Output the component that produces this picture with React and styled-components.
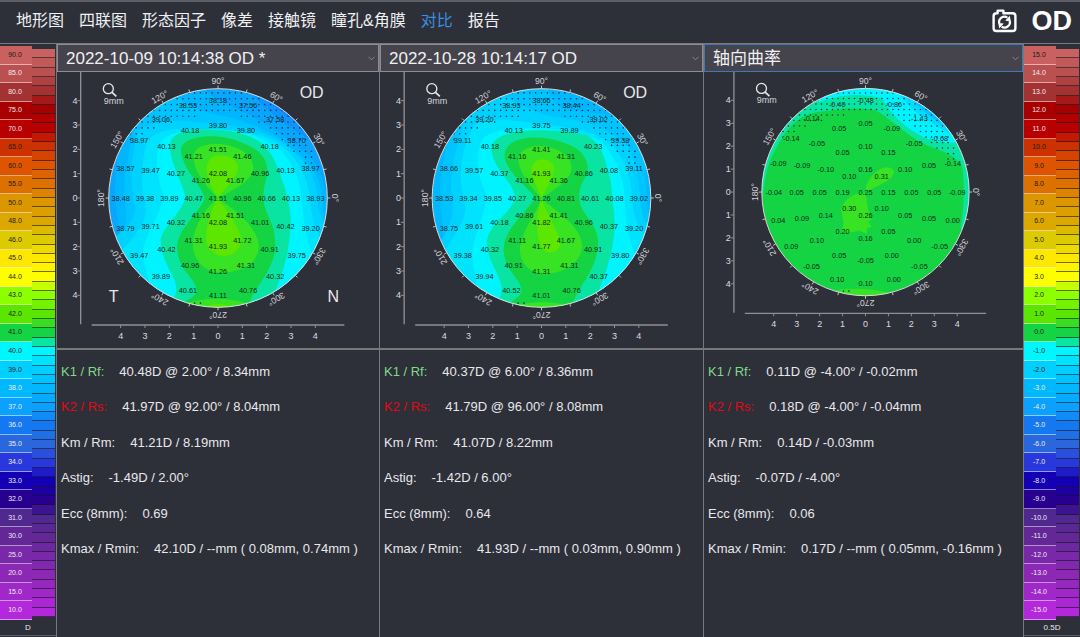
import React, { useState } from 'react';
import styled, { createGlobalStyle } from 'styled-components';

const GlobalStyle = createGlobalStyle`
  * { box-sizing: border-box; }
  body {
    margin: 0;
    background: #2d2f39;
    color: #e8e8ea;
    font-family: "Liberation Sans", "Noto Sans CJK SC", sans-serif;
  }
`;

const Page = styled.div`
  display: flex;
  flex-direction: column;
  min-height: 100vh;
`;

const Header = styled.header`
  display: flex;
  align-items: center;
  justify-content: space-between;
  height: 44px;
  padding: 0 8px 4px 16px;
  border-top: 2px solid #5b5e66;
  border-bottom: 1px solid #77797f;
`;

const Nav = styled.nav`
  display: flex;
  gap: 15px;
`;

const NavLink = styled.a`
  font-size: 16px;
  line-height: 24px;
  white-space: nowrap;
  text-decoration: none;
  color: ${(props) => (props.$active ? '#3b8de0' : '#f0f0f2')};
`;

const HeaderRight = styled.div`
  display: flex;
  align-items: center;
  gap: 15px;
`;

const CameraButton = styled.button`
  display: flex;
  padding: 0;
  border: none;
  background: none;
  color: #fff;
  cursor: pointer;
`;

const Eye = styled.span`
  font-size: 27px;
  line-height: 30px;
  font-weight: bold;
  color: #fff;
`;

const Body = styled.main`
  display: flex;
  flex: 1;
`;

// color scales on both sides

const Scale = styled.aside`
  display: flex;
  flex-direction: column;
  width: ${(props) => (props.$side === 'left' ? '57px' : '56px')};
  border-right: ${(props) => (props.$side === 'left' ? '1px solid #77797f' : 'none')};
`;

const ScaleBars = styled.div`
  display: grid;
  grid-template-columns: 32px 1fr;
  height: 576px;
  padding: 2px 0 0;
`;

const Steps = styled.ol`
  display: grid;
  grid-auto-rows: 1fr;
  margin: 0;
  padding: 0;
  list-style: none;
`;

const Step = styled.li`
  display: flex;
  align-items: center;
  justify-content: center;
  min-height: 0;
  font-size: 7px;
  line-height: 8px;
  padding-right: 2px;
  background: ${(props) => props.$color};
  color: ${(props) => (props.$dark ? '#1c1c10' : '#ececf4')};
  border-bottom: 1px solid rgba(255, 255, 255, 0.5);
`;

const Ladder = styled.div`
  display: grid;
  grid-auto-rows: 1fr;
  margin: 3px 1px 3px 0;
`;

const Band = styled.span`
  min-height: 0;
  background: ${(props) => props.$color};
  border-bottom: 1px solid rgba(20, 20, 30, 0.6);
`;

const ScaleUnit = styled.div`
  height: 16px;
  font-size: 8px;
  line-height: 16px;
  text-align: center;
  border-bottom: 1px solid #5b5e66;
`;

// exam panels

const Panels = styled.div`
  display: grid;
  grid-template-columns: 323fr 324fr 320fr;
  flex: 1;
`;

const Panel = styled.section`
  display: flex;
  flex-direction: column;
  min-width: 0;
  border-right: 1px solid #77797f;
`;

const SelectBox = styled.div`
  display: grid;
  align-items: center;

  > * {
    grid-area: 1 / 1;
  }

  svg {
    justify-self: end;
    margin-right: 4px;
    pointer-events: none;
  }
`;

const ExamSelect = styled.select`
  appearance: none;
  width: 100%;
  height: 28px;
  padding: 0 20px 0 8px;
  border: 1px solid ${(props) => (props.$active ? '#3f78b4' : '#8d8d93')};
  border-radius: 0;
  background: #45444c;
  color: #f0f0f2;
  font-family: inherit;
  font-size: 17px;
  outline: none;
`;

const MapSvg = styled.svg`
  display: block;
  width: 100%;
  height: 276px;
  font-family: "Liberation Sans", sans-serif;
`;

const Results = styled.dl`
  display: grid;
  grid-template-rows: repeat(6, 1fr);
  height: 219px;
  margin: 0;
  padding: 4px 4px 0;
  border-top: 2px solid #77797b;
`;

const Result = styled.div`
  display: flex;
  align-items: center;
  gap: 15px;
  font-size: 13px;
  line-height: 20px;
  white-space: nowrap;
`;

const ResultName = styled.dt`
  color: ${(props) => props.$color || '#e8e8ea'};
`;

const ResultValue = styled.dd`
  margin: 0;
`;

// [background, dark text]
const STEP_COLORS = [
  ['#c96161', true], ['#bb5050', false], ['#a43232', false], ['#a80000', false],
  ['#b80000', false], ['#cb3200', true], ['#de5400', true], ['#dc7000', true],
  ['#dc9600', true], ['#dca800', true], ['#dccb00', true], ['#ffe800', true],
  ['#ffff00', true], ['#8cff00', true], ['#5ae600', true], ['#14d444', true],
  ['#00f6ff', true], ['#00d0ff', true], ['#00b8ff', false], ['#0ca0ff', false],
  ['#1478f0', false], ['#2a66dc', false], ['#2838dc', false], ['#1400b4', false],
  ['#280090', false], ['#502890', false], ['#642896', false], ['#7828a8', false],
  ['#8c28b4', false], ['#a028c8', false], ['#b428dc', false],
];

const POWER_STEPS = [
  90, 85, 80, 75, 70, 65, 60, 55, 50, 48, 46, 45, 44, 43, 42, 41,
  40, 39, 38, 37, 36, 35, 34, 33, 32, 31, 30, 25, 20, 15, 10,
];
const DIFF_STEPS = STEP_COLORS.map((_, i) => 15 - i);

const NAV_ITEMS = ['地形图', '四联图', '形态因子', '像差', '接触镜', '瞳孔&角膜', '对比', '报告'];

const MAP_1 = {
  radius: 328,
  mm: 73,
  viewBox: '-480 -378 960 828',
  eye: 'OD',
  sides: true,
  base: '#08a6ff',
  center: '41.51',
  rings: [
    '40.96 41.67 42.08 41.26 40.47 41.16 42.08 41.51',
    '40.66 40.96 41.46 41.51 41.21 40.27 39.89 40.32 41.31 41.93 41.72 41.01',
    '40.13 40.13 40.18 39.80 39.80 40.18 40.13 39.47 39.38 39.71 40.42 40.96 41.26 41.31 40.91 40.42',
    '38.93 38.97 38.70 37.58 37.56 38.18 38.53 39.06 38.97 38.57 38.48 38.79 39.47 39.89 40.61 41.11 40.76 40.32 39.75 39.20',
  ],
  zones: [
    ['#0c94ff', 'M80 -340 C120 -280 190 -225 330 -140 L400 -340Z'],
    ['#1480fa', 'M110 -340 C150 -285 200 -250 300 -185 L400 -340Z'],
    ['#00b6ff', 'M-270 -340 C-300 -120 -318 -30 -305 30 C-295 110 -290 140 -270 220 L-180 400 L400 400 L330 60 C330 -30 310 -90 270 -130 C200 -190 120 -240 40 -275 C0 -290 -30 -320 -60 -340Z'],
    ['#00c4ff', 'M-210 -340 C-270 -160 -290 -50 -278 20 C-270 100 -290 130 -310 200 L-180 400 L400 400 L315 40 C315 -50 290 -90 240 -135 C180 -190 110 -225 20 -245 C-50 -255 -110 -285 -170 -340Z'],
    ['#00d2ff', 'M-240 -200 C-262 -120 -264 -50 -250 20 C-246 60 -265 90 -330 130 L-180 400 L400 400 L345 120 C315 80 302 50 298 0 C294 -70 260 -110 215 -150 C160 -195 90 -215 0 -222 C-90 -232 -190 -245 -240 -200Z'],
    ['#00e3ff', 'M-215 -160 C-232 -100 -232 -30 -216 30 C-216 80 -245 110 -300 170 L-200 400 L400 400 L320 140 C290 100 280 60 276 0 C268 -60 245 -110 200 -150 C140 -200 60 -200 0 -203 C-90 -212 -190 -218 -215 -160Z'],
    ['#00f4ff', 'M-170 -170 C-195 -130 -180 -60 -165 -10 C-170 60 -225 110 -225 170 C-220 220 -200 250 -190 340 L250 340 L290 190 C260 110 256 60 250 0 C246 -60 220 -120 170 -158 C110 -200 0 -212 -60 -205 C-110 -200 -150 -195 -170 -170Z'],
    ['#0ae4a2', 'M-143 -166 C-150 -110 -105 -50 -98 0 C-112 50 -172 90 -172 130 C-170 200 -118 240 -126 280 C-130 310 -150 320 -160 340 L150 340 C170 270 218 200 218 60 C216 20 206 -20 190 -60 C170 -120 150 -160 100 -182 C50 -208 -130 -225 -143 -166Z'],
    ['#14d444', 'M-111 -146 C-111 -90 -50 -40 -40 0 C-50 40 -122 90 -123 150 C-118 220 -68 240 -64 275 C-64 300 -100 305 -110 320 L90 340 C95 270 170 230 172 140 C172 70 138 50 136 0 C136 -50 152 -60 148 -90 C140 -140 100 -155 60 -170 C0 -195 -105 -190 -111 -146Z'],
    ['#37e322', 'M0 0 C-40 -40 -74 -80 -74 -128 C-68 -158 -30 -163 0 -162 C60 -160 106 -130 106 -90 C104 -50 40 -20 0 0Z'],
    ['#37e322', 'M0 0 C-40 30 -76 90 -76 142 C-70 200 -30 224 10 224 C70 222 122 200 122 142 C118 80 40 30 0 0Z'],
    ['#5ce600', 'M0 0 C-20 -30 -34 -60 -34 -90 C-32 -118 -12 -128 8 -128 C40 -126 60 -110 60 -90 C58 -60 20 -30 0 0Z'],
    ['#5ce600', 'M0 0 C-18 30 -36 80 -36 120 C-34 160 -5 174 20 174 C50 172 70 150 70 124 C62 80 20 30 0 0Z'],
    ['#37e322', 'M-120 326 C-60 294 50 294 110 326 L0 350Z'],
    ['#5ce600', 'M-44 330 C-20 314 20 314 44 330Z'],
  ],
};

const MAP_2 = {
  radius: 328,
  mm: 73,
  viewBox: '-480 -378 960 828',
  eye: 'OD',
  base: '#00b8ff',
  center: '41.26',
  rings: [
    '40.81 41.36 41.93 41.16 40.27 40.86 41.82 41.41',
    '40.61 40.86 41.31 41.41 41.16 40.37 39.85 40.18 41.11 41.77 41.67 40.96',
    '40.08 40.08 40.23 39.89 39.75 40.13 40.18 39.57 39.34 39.61 40.32 40.91 41.31 41.31 40.91 40.37',
    '39.02 39.11 39.38 39.02 38.44 38.66 38.93 39.20 39.11 38.66 38.53 38.75 39.38 39.94 40.52 41.01 40.76 40.37 39.80 39.20',
  ],
  zones: [
    ['#00c4ff', 'M-230 -340 C-290 -160 -310 -60 -302 0 C-294 110 -290 140 -300 220 L-180 400 L400 400 L318 40 C318 -40 300 -80 320 -120 L240 -240 C160 -260 90 -255 50 -275 C30 -300 20 -320 10 -340Z'],
    ['#00d2ff', 'M-215 -280 C-260 -160 -280 -60 -268 10 C-262 60 -280 110 -330 160 L-180 400 L400 400 L340 100 C300 70 298 40 296 0 C292 -60 285 -100 260 -150 C200 -220 110 -235 20 -245 C-30 -265 -120 -300 -150 -340Z'],
    ['#00e3ff', 'M-200 -220 C-250 -140 -250 -40 -228 20 C-226 80 -270 110 -310 200 L-180 400 L400 400 L330 130 C280 90 276 40 272 0 C268 -70 250 -120 210 -160 C160 -205 60 -215 0 -222 C-80 -232 -150 -245 -200 -220Z'],
    ['#00f4ff', 'M-175 -180 C-205 -130 -190 -60 -165 -10 C-170 60 -205 110 -208 170 C-204 230 -190 260 -180 340 L250 340 L290 190 C255 110 252 60 250 0 C246 -60 225 -120 180 -170 C110 -205 0 -212 -60 -210 C-110 -206 -150 -200 -175 -180Z'],
    ['#0ae4a2', 'M-151 -150 C-150 -90 -85 -50 -78 0 C-95 50 -162 80 -164 135 C-160 200 -114 240 -120 280 C-124 310 -140 320 -150 340 L150 340 C170 270 214 200 220 80 C218 30 214 20 208 -50 C190 -120 180 -170 130 -190 C50 -206 -140 -220 -151 -150Z'],
    ['#14d444', 'M-111 -130 C-111 -80 -35 -30 -20 0 C-45 45 -112 90 -114 155 C-110 220 -64 240 -60 275 C-60 300 -90 305 -100 320 L90 340 C95 270 168 230 170 130 C166 70 115 50 113 0 C113 -50 140 -60 139 -95 C130 -140 100 -155 60 -168 C0 -190 -105 -190 -111 -130Z'],
    ['#37e322', 'M0 0 C-30 -30 -70 -80 -70 -120 C-60 -150 -30 -158 0 -156 C60 -150 94 -120 90 -85 C84 -50 30 -20 0 0Z'],
    ['#37e322', 'M0 0 C-15 50 -64 100 -65 160 C-60 210 -20 228 10 228 C70 226 122 190 122 142 C118 80 40 40 0 0Z'],
    ['#5ce600', 'M0 0 C-10 -30 -30 -60 -30 -85 C-28 -108 -12 -116 6 -116 C26 -114 38 -100 38 -88 C36 -60 14 -30 0 0Z'],
    ['#5ce600', 'M0 0 C-8 30 -16 60 -12 100 C-8 140 2 162 24 164 C46 162 58 150 56 134 C44 80 10 40 0 0Z'],
    ['#37e322', 'M-90 326 C-50 308 50 308 95 326 L0 350Z'],
  ],
};

const MAP_3 = {
  radius: 312,
  mm: 69,
  viewBox: '-486 -360 960 828',
  base: '#14d444',
  center: '0.25',
  rings: [
    '0.15 0.31 0.16 0.10 0.19 0.30 0.26 0.10',
    '0.05 0.10 0.15 0.10 0.05 -0.10 0.05 0.14 0.20 0.16 0.05 0.05',
    '0.05 0.05 -0.05 -0.09 0.05 0.05 -0.05 -0.09 0.05 0.09 0.10 0.05 -0.05 0.00 0.00 0.05',
    '-0.09 -0.14 -0.68 -1.43 -0.86 -0.48 -0.40 -0.14 -0.14 -0.09 -0.04 0.04 0.09 -0.05 0.10 0.10 0.00 -0.05 -0.05 0.00',
  ],
  zones: [
    ['#0ae4a2', 'M-330 60 C-300 20 -310 -40 -285 -100 C-250 -170 -220 -225 -150 -240 C-90 -248 -30 -258 30 -246 C80 -220 130 -160 200 -135 C240 -120 270 -110 290 -80 C300 -20 296 60 285 110 L330 120 L380 -340 L-340 -340Z'],
    ['#00f4ff', 'M-140 -270 C-70 -298 0 -296 50 -282 C70 -240 130 -180 190 -160 C230 -150 260 -145 290 -150 L340 -330 L-140 -340Z'],
    ['#00dcff', 'M85 -330 C110 -270 140 -240 260 -172 L340 -330Z'],
    ['#00c2ff', 'M110 -330 C140 -270 170 -240 250 -190 L340 -330Z'],
    ['#37e322', 'M0 0 C0 -40 40 -78 70 -74 C96 -66 86 -46 60 -30 C30 -14 14 -8 0 0Z'],
    ['#37e322', 'M0 4 C-30 0 -60 16 -74 50 C-70 80 -60 90 -72 116 C-60 126 -40 122 -20 116 L4 126 L4 110 L18 104 L8 88 L18 84 C8 60 4 30 0 4Z'],
    ['#37e322', 'M-110 300 C-60 286 20 288 80 306 L0 340Z'],
  ],
};

// dotted area where the data was extrapolated: row -> ranges of columns
const DOT_ROWS = {
  18: [[-5, 5]],
  17: [[-8, 8]],
  16: [[-10, 10]],
  15: [[-11, 11]],
  14: [[-12, -4], [4, 12]],
  13: [[-13, -8], [7, 13]],
  12: [[-14, -11], [9, 14]],
  11: [[-15, -13], [10, 14]],
  10: [[-16, -15], [11, 15]],
  9: [[12, 15]],
  8: [[13, 16]],
  7: [[15, 16]],
  6: [[15, 16]],
  '-18': [[-4, -3]],
};

const EXAMS = [
  {
    id: 'first',
    title: '2022-10-09 10:14:38 OD *',
    map: MAP_1,
    results: [
      ['K1 / Rf:', '40.48D @ 2.00° / 8.34mm'],
      ['K2 / Rs:', '41.97D @ 92.00° / 8.04mm'],
      ['Km / Rm:', '41.21D / 8.19mm'],
      ['Astig:', '-1.49D / 2.00°'],
      ['Ecc (8mm):', '0.69'],
      ['Kmax / Rmin:', '42.10D / --mm ( 0.08mm, 0.74mm )'],
    ],
  },
  {
    id: 'second',
    title: '2022-10-28 10:14:17 OD',
    map: MAP_2,
    results: [
      ['K1 / Rf:', '40.37D @ 6.00° / 8.36mm'],
      ['K2 / Rs:', '41.79D @ 96.00° / 8.08mm'],
      ['Km / Rm:', '41.07D / 8.22mm'],
      ['Astig:', '-1.42D / 6.00°'],
      ['Ecc (8mm):', '0.64'],
      ['Kmax / Rmin:', '41.93D / --mm ( 0.03mm, 0.90mm )'],
    ],
  },
  {
    id: 'diff',
    title: '轴向曲率',
    active: true,
    map: MAP_3,
    results: [
      ['K1 / Rf:', '0.11D @ -4.00° / -0.02mm'],
      ['K2 / Rs:', '0.18D @ -4.00° / -0.04mm'],
      ['Km / Rm:', '0.14D / -0.03mm'],
      ['Astig:', '-0.07D / -4.00°'],
      ['Ecc (8mm):', '0.06'],
      ['Kmax / Rmin:', '0.17D / --mm ( 0.05mm, -0.16mm )'],
    ],
  },
];

const RESULT_COLORS = ['#7fdc86', '#e00a14'];

const polar = (r, deg) => {
  const a = (deg * Math.PI) / 180;
  return [r * Math.cos(a), -r * Math.sin(a)];
};

function CameraIcon() {
  return (
    <svg width="25" height="24" viewBox="0 0 25 24" fill="none" stroke="currentColor" strokeWidth="2.4" strokeLinejoin="round" aria-hidden="true">
      <path d="M5.6 4.2 V1.6 H11.4 V4.2 H20.6 Q23.4 4.2 23.4 7 V19.2 Q23.4 22 20.6 22 H4.4 Q1.6 22 1.6 19.2 V7 Q1.6 4.2 4.4 4.2Z" />
      <path d="M7.2 14.4 A5.4 5.4 0 0 1 15.4 8.6" strokeWidth="2.2" />
      <path d="M17.8 11.8 A5.4 5.4 0 0 1 9.6 17.6" strokeWidth="2.2" />
      <path d="M13.2 11.8 L18.8 12.2 L17.8 6.8Z" fill="currentColor" stroke="none" />
      <path d="M11.8 14.4 L6.2 14 L7.2 19.4Z" fill="currentColor" stroke="none" />
    </svg>
  );
}

function ColorScale({ side, values, unit }) {
  const bands = [];
  STEP_COLORS.forEach(([color], i) => {
    bands.push(color);
    if (i < STEP_COLORS.length - 1) {
      bands.push(`color-mix(in srgb, ${color}, ${STEP_COLORS[i + 1][0]})`);
    }
  });

  return (
    <Scale $side={side}>
      <ScaleBars>
        <Steps>
          {values.map((value, i) => (
            <Step key={value} $color={STEP_COLORS[i][0]} $dark={STEP_COLORS[i][1]}>
              {value.toFixed(1)}
            </Step>
          ))}
        </Steps>
        <Ladder>
          {bands.map((color, i) => <Band key={i} $color={color} />)}
        </Ladder>
      </ScaleBars>
      <ScaleUnit>{unit}</ScaleUnit>
    </Scale>
  );
}

function TopographyMap({ id, map }) {
  const { radius, mm } = map;
  const dotGap = mm * 0.24;
  const half = radius + 51;
  const marks = [-4, -3, -2, -1, 0, 1, 2, 3, 4];

  const dots = [];
  Object.entries(DOT_ROWS).forEach(([row, ranges]) => {
    ranges.forEach(([from, to]) => {
      for (let col = from; col <= to; col++) {
        dots.push([col * dotGap, -row * dotGap]);
      }
    });
  });

  const values = [[0, 0, map.center]];
  map.rings.forEach((ring, r) => {
    const list = ring.split(' ');
    list.forEach((value, i) => {
      const [x, y] = polar((r + 1) * mm, (360 / list.length) * i);
      values.push([x, y, value]);
    });
  });

  return (
    <MapSvg viewBox={map.viewBox} textAnchor="middle">
      <clipPath id={`${id}-clip`}>
        <circle r={radius} />
      </clipPath>
      <g clipPath={`url(#${id}-clip)`}>
        <circle r={radius} fill={map.base} />
        {map.zones.map(([color, d], i) => <path key={i} fill={color} d={d} />)}
        {dots.map(([x, y], i) => <circle key={i} cx={x} cy={y} r="2.5" fill="#0b3a5c" />)}
      </g>
      <circle r={radius} fill="none" stroke="#d8dcdc" strokeWidth="3" />

      <g stroke="#c4c4c8" strokeWidth="3">
        {Array.from({ length: 24 }, (_, i) => {
          const [x1, y1] = polar(radius, i * 15);
          const [x2, y2] = polar(radius + 9, i * 15);
          return <line key={i} x1={x1} y1={y1} x2={x2} y2={y2} />;
        })}
      </g>
      <g fill="#d4d4d8" fontSize="26">
        {Array.from({ length: 12 }, (_, i) => {
          const deg = i * 30;
          const [x, y] = polar(radius + 22, deg);
          return (
            <text key={deg} transform={`translate(${x} ${y}) rotate(${90 - deg})`} dy="9">
              {deg}°
            </text>
          );
        })}
      </g>

      <g stroke="#8f9096" strokeWidth="4">
        <line x1={-radius - 84} y1={-half} x2={-radius - 84} y2={half} />
        <line x1={-half} y1={radius + 53} x2={half} y2={radius + 53} />
        {marks.map((m) => (
          <g key={m} strokeWidth="3">
            <line x1={-radius - 94} y1={m * mm} x2={-radius - 84} y2={m * mm} />
            <line x1={m * mm} y1={radius + 53} x2={m * mm} y2={radius + 62} />
          </g>
        ))}
      </g>
      <g fill="#dcdce0" fontSize="27">
        {marks.map((m) => (
          <g key={m}>
            <text x={-radius - 101} y={m * mm + 9}>{Math.abs(m)}</text>
            <text x={m * mm} y={radius + 94}>{Math.abs(m)}</text>
          </g>
        ))}
      </g>

      <g fill="#0d2a1c" fontSize="22">
        {values.map(([x, y, value], i) => <text key={i} x={x} y={y + 8}>{value}</text>)}
      </g>

      <g transform={`translate(${-radius - 1} ${-radius})`} fill="none" stroke="#e8e8ea" strokeWidth="4">
        <circle r="15" />
        <line x1="11" y1="11" x2="24" y2="23" strokeWidth="5" />
      </g>
      <text x={-radius + 15} y={-radius + 45} fill="#d4d4d8" fontSize="27">9mm</text>
      <g fill="#e8e8ea" fontSize="48">
        {map.eye && <text x="281" y="-301">{map.eye}</text>}
        {map.sides && <text x="-313" y="313">T</text>}
        {map.sides && <text x="346" y="313">N</text>}
      </g>
    </MapSvg>
  );
}

function ExamPanel({ exam }) {
  const [value, setValue] = useState(exam.id);

  return (
    <Panel>
      <SelectBox>
        <ExamSelect
          aria-label={exam.title}
          $active={exam.active}
          value={value}
          onChange={(e) => setValue(e.target.value)}
        >
          <option value={exam.id}>{exam.title}</option>
        </ExamSelect>
        <svg width="7" height="5" viewBox="0 0 7 5" fill="none" stroke="#85858c" aria-hidden="true">
          <path d="M0.5 0.8 L3.5 3.8 L6.5 0.8" />
        </svg>
      </SelectBox>
      <TopographyMap id={exam.id} map={exam.map} />
      <Results>
        {exam.results.map(([name, text], i) => (
          <Result key={name}>
            <ResultName $color={RESULT_COLORS[i]}>{name}</ResultName>
            <ResultValue>{text}</ResultValue>
          </Result>
        ))}
      </Results>
    </Panel>
  );
}

function App() {
  return (
    <Page>
      <GlobalStyle />
      <Header>
        <Nav>
          {NAV_ITEMS.map((item) => (
            <NavLink key={item} href="#" $active={item === '对比'}>{item}</NavLink>
          ))}
        </Nav>
        <HeaderRight>
          <CameraButton type="button" aria-label="OD">
            <CameraIcon />
          </CameraButton>
          <Eye>OD</Eye>
        </HeaderRight>
      </Header>
      <Body>
        <ColorScale side="left" values={POWER_STEPS} unit="D" />
        <Panels>
          {EXAMS.map((exam) => <ExamPanel key={exam.id} exam={exam} />)}
        </Panels>
        <ColorScale side="right" values={DIFF_STEPS} unit="0.5D" />
      </Body>
    </Page>
  );
}

export default App;
